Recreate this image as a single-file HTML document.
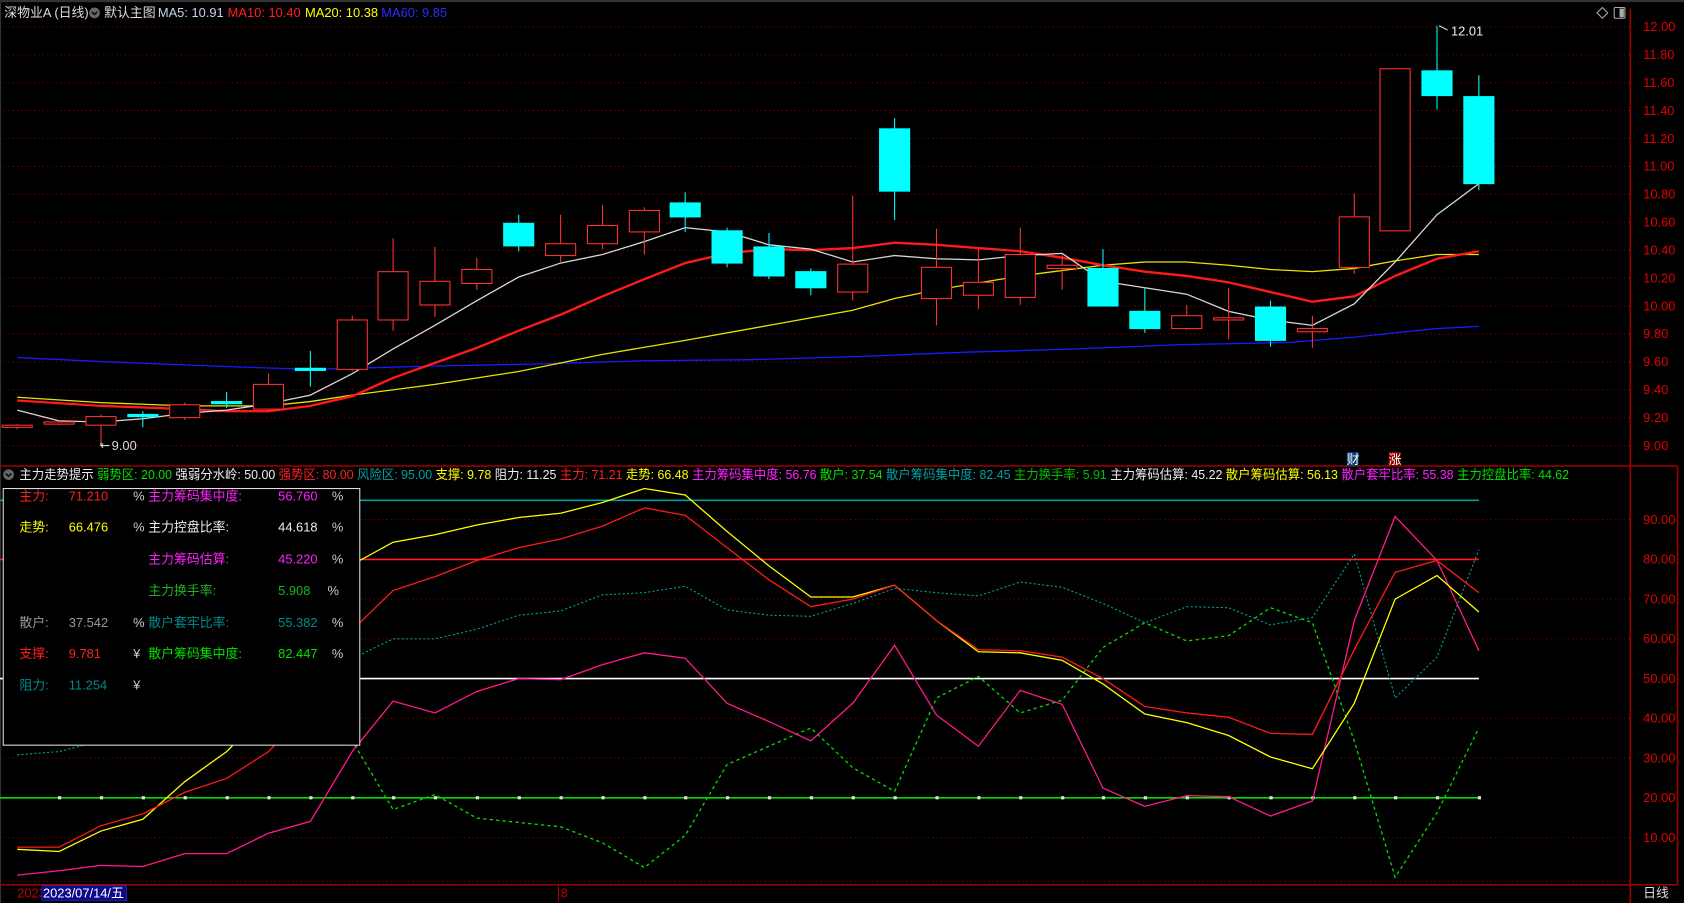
<!DOCTYPE html>
<html><head><meta charset="utf-8"><style>
html,body{margin:0;padding:0;background:#000;overflow:hidden}
svg{display:block}
text{font-family:"Liberation Sans","Noto Sans CJK SC",sans-serif;font-size:12px}
</style></head><body>
<svg width="1684" height="903" viewBox="0 0 1568 841" preserveAspectRatio="none" xmlns="http://www.w3.org/2000/svg">
<rect width="1568" height="841" fill="#000"/>
<rect x="0" y="0" width="1568" height="2" fill="#333"/>
<g stroke="#8a0000" stroke-dasharray="1,3" stroke-width="1">
<line x1="0" x2="1518" y1="25" y2="25"/><line x1="0" x2="1518" y1="51" y2="51"/><line x1="0" x2="1518" y1="77" y2="77"/><line x1="0" x2="1518" y1="103" y2="103"/><line x1="0" x2="1518" y1="129" y2="129"/><line x1="0" x2="1518" y1="155" y2="155"/><line x1="0" x2="1518" y1="181" y2="181"/><line x1="0" x2="1518" y1="207" y2="207"/><line x1="0" x2="1518" y1="233" y2="233"/><line x1="0" x2="1518" y1="259" y2="259"/><line x1="0" x2="1518" y1="285" y2="285"/><line x1="0" x2="1518" y1="311" y2="311"/><line x1="0" x2="1518" y1="337" y2="337"/><line x1="0" x2="1518" y1="363" y2="363"/><line x1="0" x2="1518" y1="389" y2="389"/><line x1="0" x2="1518" y1="415" y2="415"/>
<line x1="0" x2="1518" y1="484" y2="484"/><line x1="0" x2="1518" y1="558" y2="558"/><line x1="0" x2="1518" y1="595" y2="595"/><line x1="0" x2="1518" y1="669" y2="669"/><line x1="0" x2="1518" y1="706" y2="706"/><line x1="0" x2="1518" y1="780" y2="780"/><line x1="0" x2="1518" y1="821" y2="821"/>
</g>
<g stroke="#a00000" stroke-width="1.5">
<line x1="1518" y1="8" x2="1518" y2="841"/>
<line x1="0" y1="434" x2="1562" y2="434"/>
<line x1="0" y1="824" x2="1562" y2="824"/>
<line x1="1562" y1="434" x2="1562" y2="824"/>
</g>
<line x1="0.5" y1="0" x2="0.5" y2="841" stroke="#333"/>
<g fill="#e00000">
<text x="1530" y="29">12.00</text><text x="1530" y="55">11.80</text><text x="1530" y="81">11.60</text><text x="1530" y="107">11.40</text><text x="1530" y="133">11.20</text><text x="1530" y="159">11.00</text><text x="1530" y="185">10.80</text><text x="1530" y="211">10.60</text><text x="1530" y="237">10.40</text><text x="1530" y="263">10.20</text><text x="1530" y="289">10.00</text><text x="1530" y="315">9.80</text><text x="1530" y="341">9.60</text><text x="1530" y="367">9.40</text><text x="1530" y="393">9.20</text><text x="1530" y="419">9.00</text>
<text x="1530" y="488">90.00</text><text x="1530" y="525">80.00</text><text x="1530" y="562">70.00</text><text x="1530" y="599">60.00</text><text x="1530" y="636">50.00</text><text x="1530" y="673">40.00</text><text x="1530" y="710">30.00</text><text x="1530" y="747">20.00</text><text x="1530" y="784">10.00</text>
</g>
<text x="1530" y="836" fill="#ddd">日线</text>
<path d="M1492 7 L1497 12 L1492 17 L1487 12 Z" fill="none" stroke="#aaa"/>
<rect x="1503" y="7" width="10" height="10" rx="1" fill="none" stroke="#aaa"/><rect x="1508" y="8" width="4" height="8" fill="#aaa"/>
<circle cx="88" cy="12" r="5" fill="#666"/><path d="M85.5 11 L88 13.5 L90.5 11" stroke="#000" fill="none" stroke-width="1.3"/>
<text x="4" y="16" fill="#ddd">深物业A (日线)</text>
<text x="97" y="16" fill="#ddd">默认主图</text>
<text x="147" y="16" fill="#c8d4ee">MA5: 10.91</text>
<text x="212" y="16" fill="#ff2020">MA10: 10.40</text>
<text x="284" y="16" fill="#ffff00">MA20: 10.38</text>
<text x="355" y="16" fill="#2b2bff">MA60: 9.85</text>
<polyline fill="none" stroke="#1a1aff" stroke-width="1.2" points="16,333 100,337 200,341 289,344 400,341 500,339 600,336 700,335 800,332 900,328 1000,325 1100,321 1200,319 1261,314 1299,310 1338,306 1377,304"/>
<polyline fill="none" stroke="#e6e600" stroke-width="1.2" points="16,370 94,375 172,378 250,378 289,374 328,368 405,358 483,346 561,330 638,317 716,303 794,289 833,278 872,270 950,257 1027,247 1066,244 1105,244 1144,247 1183,251 1222,253 1261,250 1299,243 1338,237 1377,237"/>
<polyline fill="none" stroke="#ff1a1a" stroke-width="2.2" points="16,373 94,378 172,381 211,383 250,383 289,378 328,369 366,352 405,338 444,324 483,308 522,293 561,276 600,260 638,245 677,236 716,232 755,233 794,231 833,226 872,228 911,231 950,234 989,240 1027,247 1066,253 1105,257 1144,263 1183,272 1222,281 1261,276 1299,257 1338,241 1377,234"/>
<polyline fill="none" stroke="#d8d8d8" stroke-width="1.2" points="16,382 55,392 94,393 133,390 172,385 211,382 250,376 289,368 328,348 366,325 405,303 444,280 483,258 522,245 561,237 600,225 638,212 677,216 716,228 755,232 794,244 833,238 872,241 911,242 950,238 989,236 1027,262 1066,268 1105,274 1144,290 1183,298 1222,303 1261,283 1299,244 1338,200 1377,171"/>
<g stroke="#ff3030" stroke-width="1" fill="#000">
<line x1="16" y1="395" x2="16" y2="400"/><rect x="2" y="396" width="28" height="2"/>
<line x1="55" y1="392" x2="55" y2="396"/><rect x="41" y="393" width="28" height="2"/>
<line x1="94" y1="386" x2="94" y2="412"/><rect x="80" y="388" width="28" height="8"/>
<line x1="172" y1="375" x2="172" y2="391"/><rect x="158" y="377" width="28" height="12"/>
<line x1="250" y1="348" x2="250" y2="383"/><rect x="236" y="358" width="28" height="23"/>
<line x1="328" y1="294" x2="328" y2="346"/><rect x="314" y="298" width="28" height="46"/>
<line x1="366" y1="222" x2="366" y2="308"/><rect x="352" y="253" width="28" height="45"/>
<line x1="405" y1="230" x2="405" y2="295"/><rect x="391" y="262" width="28" height="22"/>
<line x1="444" y1="240" x2="444" y2="270"/><rect x="430" y="251" width="28" height="13"/>
<line x1="522" y1="200" x2="522" y2="244"/><rect x="508" y="227" width="28" height="11"/>
<line x1="561" y1="191" x2="561" y2="232"/><rect x="547" y="210" width="28" height="17"/>
<line x1="600" y1="193" x2="600" y2="237"/><rect x="586" y="196" width="28" height="20"/>
<line x1="794" y1="182" x2="794" y2="280"/><rect x="780" y="246" width="28" height="26"/>
<line x1="872" y1="213" x2="872" y2="303"/><rect x="858" y="249" width="28" height="29"/>
<line x1="911" y1="232" x2="911" y2="288"/><rect x="897" y="263" width="28" height="12"/>
<line x1="950" y1="212" x2="950" y2="284"/><rect x="936" y="237" width="28" height="40"/>
<line x1="989" y1="237" x2="989" y2="270"/><rect x="975" y="247" width="28" height="3"/>
<line x1="1105" y1="284" x2="1105" y2="307"/><rect x="1091" y="294" width="28" height="12"/>
<line x1="1144" y1="268" x2="1144" y2="316"/><rect x="1130" y="296" width="28" height="2"/>
<line x1="1222" y1="294" x2="1222" y2="324"/><rect x="1208" y="306" width="28" height="3"/>
<line x1="1261" y1="180" x2="1261" y2="255"/><rect x="1247" y="202" width="28" height="47"/>
<rect x="1285" y="64" width="28" height="151"/>
</g>
<g stroke="#00ffff" fill="#00ffff">
<line x1="133" y1="383" x2="133" y2="398"/><rect x="119" y="386" width="28" height="2"/>
<line x1="211" y1="365" x2="211" y2="380"/><rect x="197" y="374" width="28" height="2"/>
<line x1="289" y1="327" x2="289" y2="360"/><rect x="275" y="343" width="28" height="2"/>
<line x1="483" y1="200" x2="483" y2="234"/><rect x="469" y="208" width="28" height="21"/>
<line x1="638" y1="179" x2="638" y2="216"/><rect x="624" y="189" width="28" height="13"/>
<line x1="677" y1="212" x2="677" y2="249"/><rect x="663" y="215" width="28" height="30"/>
<line x1="716" y1="217" x2="716" y2="260"/><rect x="702" y="230" width="28" height="27"/>
<line x1="755" y1="250" x2="755" y2="275"/><rect x="741" y="253" width="28" height="15"/>
<line x1="833" y1="110" x2="833" y2="205"/><rect x="819" y="120" width="28" height="58"/>
<line x1="1027" y1="232" x2="1027" y2="285"/><rect x="1013" y="250" width="28" height="35"/>
<line x1="1066" y1="268" x2="1066" y2="310"/><rect x="1052" y="290" width="28" height="16"/>
<line x1="1183" y1="280" x2="1183" y2="323"/><rect x="1169" y="286" width="28" height="31"/>
<line x1="1338" y1="24" x2="1338" y2="102"/><rect x="1324" y="66" width="28" height="23"/>
<line x1="1377" y1="70" x2="1377" y2="177"/><rect x="1363" y="90" width="28" height="81"/>
</g>
<path d="M1340 24 L1348 28" stroke="#ddd" fill="none"/>
<text x="1351" y="33" fill="#eee">12.01</text>
<path d="M94 412 L94 415 L102 415 M96 413 L94 415 L96 417" stroke="#ddd" fill="none"/>
<text x="104" y="419" fill="#ddd">9.00</text>
<rect x="1254" y="421" width="11" height="13" fill="#0a3d73"/><text x="1254" y="432" fill="#fff" font-size="11">财</text>
<rect x="1293" y="421" width="11" height="13" fill="#8b0000"/><text x="1293" y="432" fill="#fff" font-size="11">涨</text>
<circle cx="8" cy="442" r="5" fill="#666"/><path d="M5.5 441 L8 443.5 L10.5 441" stroke="#000" fill="none" stroke-width="1.3"/>
<text x="18" y="446" textLength="1443" lengthAdjust="spacingAndGlyphs"><tspan fill="#eee">主力走势提示 </tspan><tspan fill="#00e000">弱势区: 20.00 </tspan><tspan fill="#eee">强弱分水岭: 50.00 </tspan><tspan fill="#ff2020">强势区: 80.00 </tspan><tspan fill="#00a0a0">风险区: 95.00 </tspan><tspan fill="#ffff00">支撑: 9.78 </tspan><tspan fill="#eee">阻力: 11.25 </tspan><tspan fill="#ff2020">主力: 71.21 </tspan><tspan fill="#ffff00">走势: 66.48 </tspan><tspan fill="#ff20ff">主力筹码集中度: 56.76 </tspan><tspan fill="#00e000">散户: 37.54 </tspan><tspan fill="#00a0a0">散户筹码集中度: 82.45 </tspan><tspan fill="#00c000">主力换手率: 5.91 </tspan><tspan fill="#eee">主力筹码估算: 45.22 </tspan><tspan fill="#ffff00">散户筹码估算: 56.13 </tspan><tspan fill="#ff20ff">散户套牢比率: 55.38 </tspan><tspan fill="#00e000">主力控盘比率: 44.62</tspan></text>
<line x1="0" x2="1377" y1="466" y2="466" stroke="#00a0a0" stroke-width="1.5"/>
<line x1="0" x2="1377" y1="521" y2="521" stroke="#ff2020" stroke-width="1.5"/>
<line x1="0" x2="1377" y1="632" y2="632" stroke="#ffffff" stroke-width="1.5"/>
<line x1="0" x2="1377" y1="743" y2="743" stroke="#00e000" stroke-width="1.5"/>
<g fill="#ddd"><rect x="54" y="741.5" width="3" height="3"/><rect x="93" y="741.5" width="3" height="3"/><rect x="132" y="741.5" width="3" height="3"/><rect x="171" y="741.5" width="3" height="3"/><rect x="210" y="741.5" width="3" height="3"/><rect x="249" y="741.5" width="3" height="3"/><rect x="288" y="741.5" width="3" height="3"/><rect x="327" y="741.5" width="3" height="3"/><rect x="365" y="741.5" width="3" height="3"/><rect x="404" y="741.5" width="3" height="3"/><rect x="443" y="741.5" width="3" height="3"/><rect x="482" y="741.5" width="3" height="3"/><rect x="521" y="741.5" width="3" height="3"/><rect x="560" y="741.5" width="3" height="3"/><rect x="599" y="741.5" width="3" height="3"/><rect x="637" y="741.5" width="3" height="3"/><rect x="676" y="741.5" width="3" height="3"/><rect x="715" y="741.5" width="3" height="3"/><rect x="754" y="741.5" width="3" height="3"/><rect x="793" y="741.5" width="3" height="3"/><rect x="832" y="741.5" width="3" height="3"/><rect x="871" y="741.5" width="3" height="3"/><rect x="910" y="741.5" width="3" height="3"/><rect x="949" y="741.5" width="3" height="3"/><rect x="988" y="741.5" width="3" height="3"/><rect x="1026" y="741.5" width="3" height="3"/><rect x="1065" y="741.5" width="3" height="3"/><rect x="1104" y="741.5" width="3" height="3"/><rect x="1143" y="741.5" width="3" height="3"/><rect x="1182" y="741.5" width="3" height="3"/><rect x="1221" y="741.5" width="3" height="3"/><rect x="1260" y="741.5" width="3" height="3"/><rect x="1298" y="741.5" width="3" height="3"/><rect x="1337" y="741.5" width="3" height="3"/><rect x="1376" y="741.5" width="3" height="3"/></g>
<polyline fill="none" stroke="#00a0a0" stroke-width="1" stroke-dasharray="2,2" points="16,703 55,700 94,690 133,680 172,665 211,650 250,635 289,622 335,610 366,595 405,595 444,586 483,573 522,569 561,554 600,552 638,546 677,568 716,573 755,574 794,562 833,548 872,552 911,555 950,542 989,547 1027,562 1066,580 1105,565 1144,566 1183,582 1222,575 1261,516 1299,650 1338,612 1377,512"/>
<polyline fill="none" stroke="#00e000" stroke-width="1.2" stroke-dasharray="3,3" points="16,640 100,630 200,650 289,660 328,690 366,754 405,740 444,762 483,766 522,770 561,785 600,808 638,778 677,712 716,695 755,678 794,715 833,737 872,650 911,630 950,664 989,652 1027,603 1066,580 1105,597 1144,592 1183,566 1222,580 1261,690 1299,817 1338,757 1377,678"/>
<polyline fill="none" stroke="#ff1a8c" stroke-width="1.2" points="16,815 55,811 94,806 133,807 172,795 211,795 250,776 289,765 328,700 366,653 405,664 444,644 483,632 522,633 561,619 600,608 638,613 677,655 716,672 755,690 794,655 833,601 872,666 911,695 950,643 989,656 1027,734 1066,751 1105,741 1144,742 1183,760 1222,746 1261,578 1299,481 1338,522 1377,606"/>
<polyline fill="none" stroke="#ffff00" stroke-width="1.2" points="16,791 55,793 94,774 133,763 172,728 211,700 250,660 289,600 335,522 366,505 405,498 444,489 483,482 522,478 561,468 600,455 638,461 677,495 716,527 755,556 794,556 833,545 872,578 911,607 950,608 989,615 1027,637 1066,665 1105,673 1144,685 1183,705 1222,716 1261,655 1299,558 1338,536 1377,570"/>
<polyline fill="none" stroke="#ff1a1a" stroke-width="1.2" points="16,789 55,789 94,769 133,758 172,738 211,725 250,700 289,660 335,580 366,550 405,537 444,522 483,510 522,502 561,490 600,473 638,480 677,510 716,540 755,565 794,558 833,545 872,578 911,605 950,606 989,612 1027,632 1066,658 1105,664 1144,668 1183,683 1222,684 1261,605 1299,533 1338,522 1377,552"/>
<rect x="3" y="455" width="332" height="239" fill="#000" stroke="#ddd" stroke-width="1"/>
<text x="18" y="466" fill="#ff2020">主力:</text><text x="64" y="466" fill="#ff2020">71.210</text><text x="124" y="466" fill="#ccc">%</text><text x="138" y="466" fill="#ff20ff">主力筹码集中度:</text><text x="259" y="466" fill="#ff20ff">56.760</text><text x="309" y="466" fill="#ccc">%</text>
<text x="18" y="495" fill="#ffff00">走势:</text><text x="64" y="495" fill="#ffff00">66.476</text><text x="124" y="495" fill="#ccc">%</text><text x="138" y="495" fill="#eee">主力控盘比率:</text><text x="259" y="495" fill="#eee">44.618</text><text x="309" y="495" fill="#ccc">%</text>
<text x="138" y="525" fill="#ff20ff">主力筹码估算:</text><text x="259" y="525" fill="#ff20ff">45.220</text><text x="309" y="525" fill="#ccc">%</text>
<text x="138" y="554" fill="#20b020">主力换手率:</text><text x="259" y="554" fill="#20b020">5.908</text><text x="305" y="554" fill="#ccc">%</text>
<text x="18" y="584" fill="#999">散户:</text><text x="64" y="584" fill="#999">37.542</text><text x="124" y="584" fill="#ccc">%</text><text x="138" y="584" fill="#008b8b">散户套牢比率:</text><text x="259" y="584" fill="#008b8b">55.382</text><text x="309" y="584" fill="#ccc">%</text>
<text x="18" y="613" fill="#ff2020">支撑:</text><text x="64" y="613" fill="#ff2020">9.781</text><text x="124" y="613" fill="#ccc">¥</text><text x="138" y="613" fill="#00e000">散户筹码集中度:</text><text x="259" y="613" fill="#00e000">82.447</text><text x="309" y="613" fill="#ccc">%</text>
<text x="18" y="642" fill="#008b8b">阻力:</text><text x="64" y="642" fill="#008b8b">11.254</text><text x="124" y="642" fill="#ccc">¥</text>
<text x="16" y="836" fill="#c00000">2023</text>
<rect x="39" y="825" width="79" height="14" fill="#0a0a8a" stroke="#3030c0" stroke-width="0.5"/>
<text x="40" y="836" fill="#fff">2023/07/14/五</text>
<line x1="520" y1="825" x2="520" y2="840" stroke="#a00000"/>
<text x="522" y="836" fill="#c00000">8</text>
<line x1="1518" y1="824" x2="1518" y2="841" stroke="#a00000"/>
</svg>
</body></html>
